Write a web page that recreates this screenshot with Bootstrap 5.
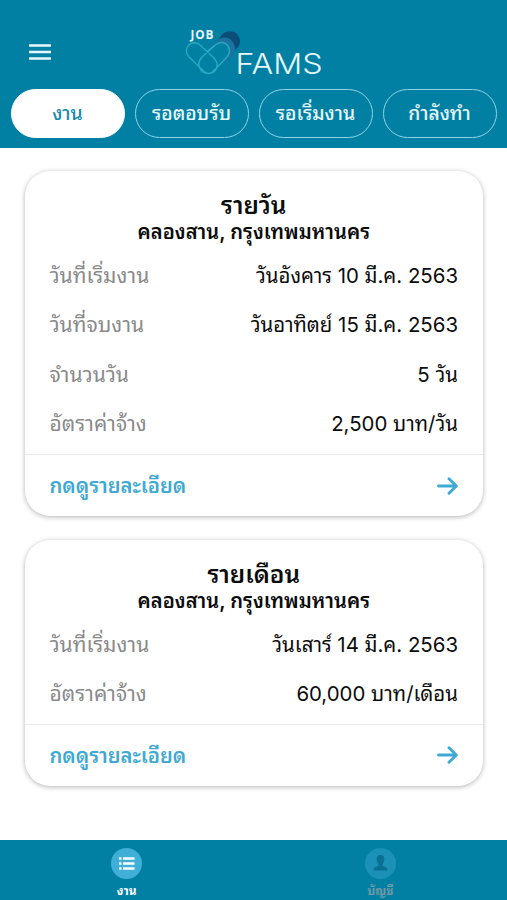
<!DOCTYPE html>
<html lang="th">
<head>
<meta charset="utf-8">
<meta name="viewport" content="width=device-width, initial-scale=1">
<title>JOB FAMS</title>
<link href="https://cdn.jsdelivr.net/npm/bootstrap@5.3.0/dist/css/bootstrap.min.css" rel="stylesheet">
<style>
:root { --teal: #0280a4; --sky: #3fa9d3; }
body { font-family: Inter, "Noto Sans Thai Looped", Loma, sans-serif; color: #0c0c0c; height: 900px; overflow: hidden; }
.app-header { background: var(--teal); height: 148px; }
.brand-row { height: 89px; padding: 0 29px; }
.menu-icon { margin-top: 15px; }
.brand-logo { margin: 26px 152px 0 0; }
.tab-pills { padding: 0 10.5px; gap: 10px; }
.pill { height: 49px; border: 1.5px solid #8fd3e8; border-radius: 25px; color: #e6f8fc; font-size: 19.3px; font-weight: 500; white-space: nowrap; }
.pill.on { background: #fff; border-color: #fff; color: #1789ab; }
.job-list { padding: 23px 24.5px 0 25px; gap: 24px; }
.job { border: 0; border-radius: 25px; box-shadow: 0 1px 5px rgba(0,0,0,.3); }
.job-head { height: 80px; padding-top: 20px; white-space: nowrap; }
.job-title { font-size: 24.3px; line-height: 28px; font-weight: 600; }
.job-place { font-size: 20.1px; line-height: 27px; font-weight: 600; }
.job-row { height: 49.25px; padding: 0 24.5px; font-size: 20.4px; line-height: 49px; white-space: nowrap; }
.job-row .key { color: #8a8a8a; font-size: 21px; }
.job-foot { height: 62px; margin-top: 6px; padding: 0 24.5px; border-top: 1.5px solid #e9e9e9; color: var(--sky); font-size: 20.2px; font-weight: 600; }
.job-foot span { padding-top: 2px; }
.job + .job .job-foot { margin-top: 5px; }
.tab-bar { background: var(--teal); height: 60px; }
.tab-item { font-size: 12px; line-height: 14px; font-weight: 700; color: #fff; padding-top: 8px; gap: 5px; }
.tab-item.off { color: #6f9aa6; }
</style>
<script src="https://cdn.jsdelivr.net/npm/bootstrap@5.3.0/dist/js/bootstrap.bundle.min.js"></script>
</head>
<body class="d-flex flex-column bg-white">
<header class="app-header flex-shrink-0">
  <div class="brand-row d-flex justify-content-between align-items-start">
    <svg class="menu-icon align-self-center" width="22" height="16" viewBox="0 0 22 16" stroke="#e9f8fc" stroke-width="2.4"><path d="M0 1.5h22M0 8h22M0 14.5h22"/></svg>
    <svg class="brand-logo" width="142" height="62" viewBox="184 26 142 62" fill="none">
      <path d="M221 36C225 30 234 30 238 35C241 40 241 45 236 49L229 57L216 43Z" fill="#0b4d78"/>
      <path d="M210 46L218 40C223 36 229 37 232 41C236 46 236 51 232 56L226 62Z" fill="#1c73a2"/>
      <path d="M207.500 51L216 44.500C225 38 234 49 227 57L213 71.500Q208.500 75.500 204 71.500L189 57C181.500 48 192 38.500 200 45L214 58C221 66 215 73.500 208.500 73.500C201 73.500 195 65 202 57L216 44.500" fill="#0280a4" stroke="#2ba8c2" stroke-width="1.500"/>
      <text x="190.500" y="38.800" font-family="'Open Sans', sans-serif" font-size="11.800" font-weight="700" fill="#e6f8fc" textLength="23">JOB</text>
      <text x="235.500" y="74" font-family="Inter, sans-serif" font-weight="300" font-size="28.500" fill="#e6f8fc" textLength="87" lengthAdjust="spacingAndGlyphs">FAMS</text>
    </svg>
  </div>
  <nav class="tab-pills d-flex">
    <a class="pill on flex-fill w-25 d-flex align-items-center justify-content-center text-decoration-none">งาน</a>
    <a class="pill flex-fill w-25 d-flex align-items-center justify-content-center text-decoration-none">รอตอบรับ</a>
    <a class="pill flex-fill w-25 d-flex align-items-center justify-content-center text-decoration-none">รอเริ่มงาน</a>
    <a class="pill flex-fill w-25 d-flex align-items-center justify-content-center text-decoration-none">กำลังทำ</a>
  </nav>
</header>
<main class="job-list d-flex flex-column flex-grow-1">
  <article class="job card">
    <div class="job-head text-center"><div class="job-title">รายวัน</div><div class="job-place">คลองสาน, กรุงเทพมหานคร</div></div>
    <div class="job-row d-flex justify-content-between"><span class="key">วันที่เริ่มงาน</span><span>วันอังคาร 10 มี.ค. 2563</span></div>
    <div class="job-row d-flex justify-content-between"><span class="key">วันที่จบงาน</span><span>วันอาทิตย์ 15 มี.ค. 2563</span></div>
    <div class="job-row d-flex justify-content-between"><span class="key">จำนวนวัน</span><span>5 วัน</span></div>
    <div class="job-row d-flex justify-content-between"><span class="key">อัตราค่าจ้าง</span><span>2,500 บาท/วัน</span></div>
    <div class="job-foot d-flex align-items-center justify-content-between"><span>กดดูรายละเอียด</span>
      <svg width="21" height="18" viewBox="0 0 21 18" fill="none" stroke="currentColor" stroke-width="2.900" stroke-linecap="round" stroke-linejoin="round"><path d="M1.500 9H19M12 1.800L19.300 9L12 16.200"/></svg></div>
  </article>
  <article class="job card">
    <div class="job-head text-center"><div class="job-title">รายเดือน</div><div class="job-place">คลองสาน, กรุงเทพมหานคร</div></div>
    <div class="job-row d-flex justify-content-between"><span class="key">วันที่เริ่มงาน</span><span>วันเสาร์ 14 มี.ค. 2563</span></div>
    <div class="job-row d-flex justify-content-between"><span class="key">อัตราค่าจ้าง</span><span>60,000 บาท/เดือน</span></div>
    <div class="job-foot d-flex align-items-center justify-content-between"><span>กดดูรายละเอียด</span>
      <svg width="21" height="18" viewBox="0 0 21 18" fill="none" stroke="currentColor" stroke-width="2.900" stroke-linecap="round" stroke-linejoin="round"><path d="M1.500 9H19M12 1.800L19.300 9L12 16.200"/></svg></div>
  </article>
</main>
<footer class="tab-bar d-flex flex-shrink-0">
  <a class="tab-item w-50 d-flex flex-column align-items-center text-decoration-none">
    <svg width="31" height="31" viewBox="0 0 31 31"><circle cx="15.500" cy="15.500" r="15.500" fill="#3fafd7"/><path d="M8 10.500h2.500M8 15.500h2.500M8 20.500h2.500M12 10.500h11.500M12 15.500h11.500M12 20.500h11.500" stroke="#fff" stroke-width="2.300"/></svg>
    <span>งาน</span></a>
  <a class="tab-item off w-50 d-flex flex-column align-items-center text-decoration-none">
    <svg width="31" height="31" viewBox="0 0 31 31"><circle cx="15.500" cy="15.500" r="15.500" fill="#1b91b8"/><path d="M15.500 7C12 7 11 10 12 13C12.500 15 13.500 16 13.500 17.500C12 19 8.500 18.500 8.500 22.500H22.500C22.500 18.500 19 19 17.500 17.500C17.500 16 18.500 15 19 13C20 10 19 7 15.500 7Z" fill="#0b6f93"/></svg>
    <span>บัญชี</span></a>
</footer>
</body>
</html>
